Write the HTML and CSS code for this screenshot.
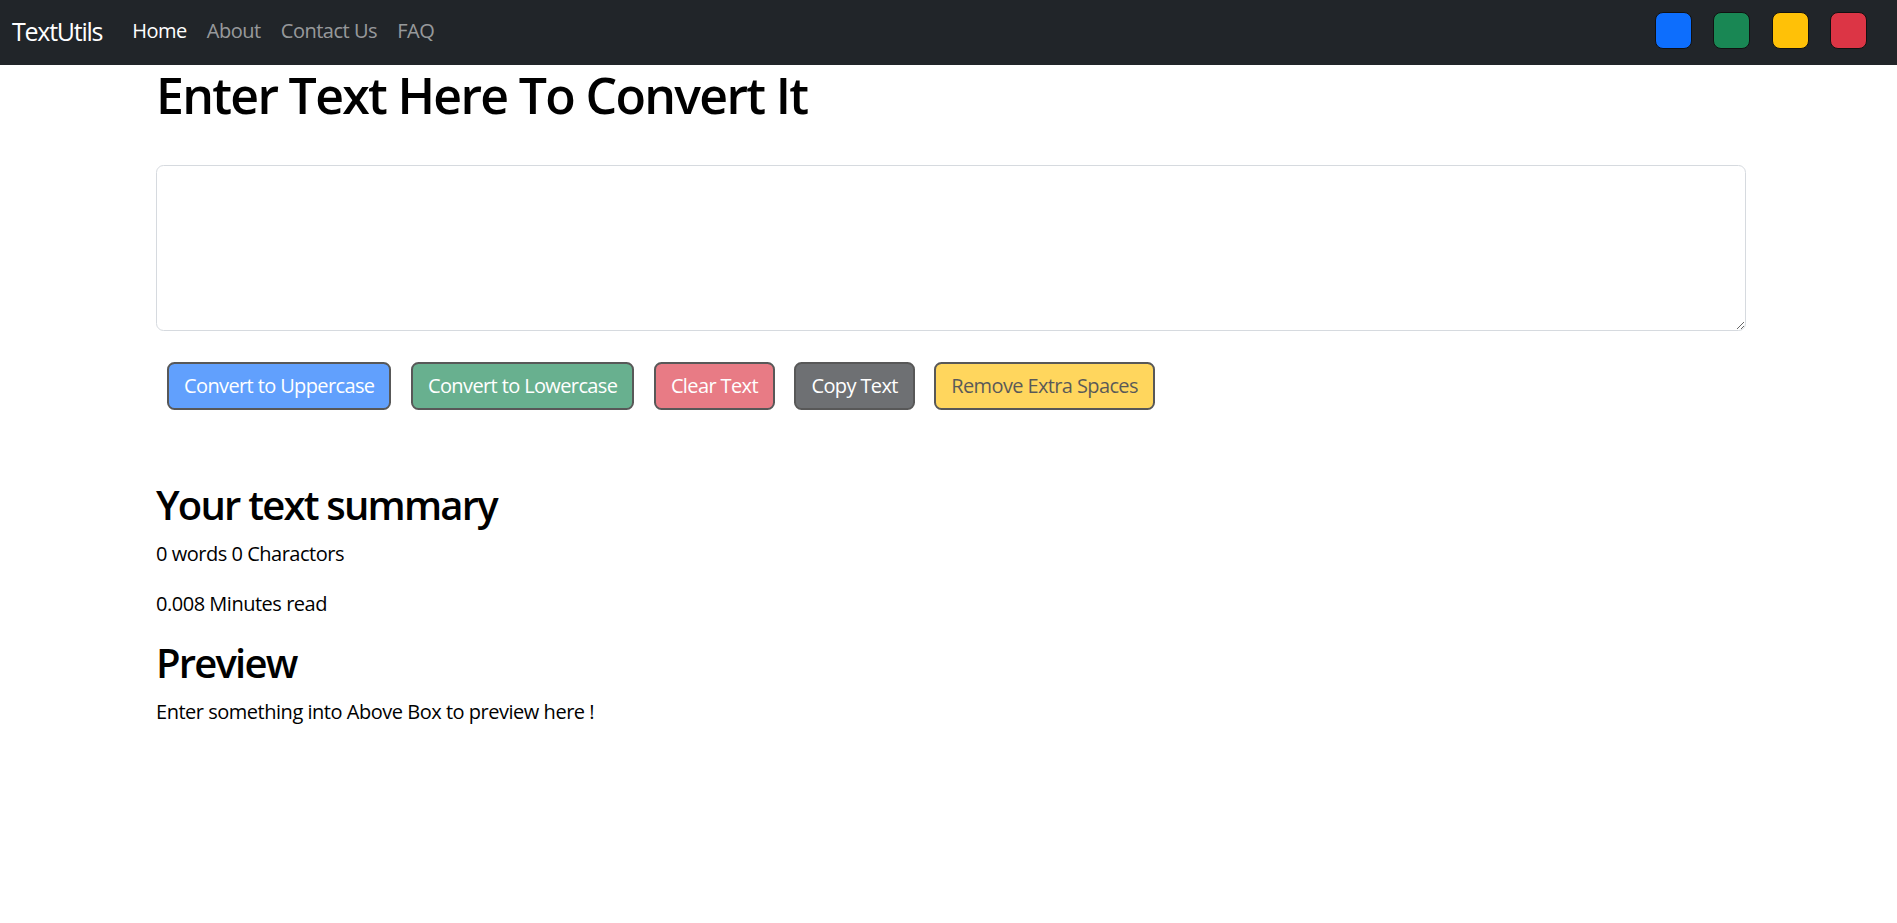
FILE: index.html
```html
<!DOCTYPE html>
<html lang="en">
<head>
<meta charset="utf-8">
<title>TextUtils</title>
<link rel="stylesheet" href="styles.css">
</head>
<body>
<nav class="navbar">
  <div class="nav-left">
    <a class="brand" href="#">TextUtils</a>
    <ul class="nav-links">
      <li><a class="nav-link active" href="#">Home</a></li>
      <li><a class="nav-link" href="#">About</a></li>
      <li><a class="nav-link" href="#">Contact Us</a></li>
      <li><a class="nav-link" href="#">FAQ</a></li>
    </ul>
  </div>
  <div class="themes">
    <span class="swatch swatch-blue"></span>
    <span class="swatch swatch-green"></span>
    <span class="swatch swatch-yellow"></span>
    <span class="swatch swatch-red"></span>
  </div>
</nav>
<main class="container">
  <h1 class="title">Enter Text Here To Convert It</h1>
  <textarea class="text-box" rows="8"></textarea>
  <div class="actions">
    <button class="btn btn-blue" disabled>Convert to Uppercase</button>
    <button class="btn btn-green" disabled>Convert to Lowercase</button>
    <button class="btn btn-red" disabled>Clear Text</button>
    <button class="btn btn-dark" disabled>Copy Text</button>
    <button class="btn btn-yellow" disabled>Remove Extra Spaces</button>
  </div>
  <section class="summary">
    <h2 class="section-title">Your text summary</h2>
    <p class="line">0 words 0 Charactors</p>
    <p class="line">0.008 Minutes read</p>
    <h2 class="section-title">Preview</h2>
    <p class="line">Enter something into Above Box to preview here !</p>
  </section>
</main>
</body>
</html>
```

FILE: styles.css
```css
* { box-sizing: border-box; }
html, body { margin: 0; padding: 0; }
body {
  font-family: "Open Sans", "Noto Sans", sans-serif;
  font-size: 20px;
  line-height: 30px;
  letter-spacing: -0.024em;
  color: #000;
  background: #fff;
}
.navbar {
  height: 65px;
  background: #212529;
  display: flex;
  align-items: center;
  justify-content: space-between;
  padding: 0 30px 4px 12px;
}
.nav-left { display: flex; align-items: center; }
.brand {
  color: #fff;
  text-decoration: none;
  font-size: 25px;
  line-height: 36px;
  letter-spacing: -0.05em;
  margin-right: 20px;
}
.nav-links { list-style: none; margin: 0; padding: 0; display: flex; }
.nav-link {
  display: block;
  padding: 0 10px;
  color: rgba(255,255,255,.55);
  text-decoration: none;
  font-size: 20px;
  line-height: 30px;
}
.nav-link.active { color: #fff; }
.themes { display: flex; gap: 21.5px; margin-top: -1px; }
.swatch {
  width: 37px;
  height: 37px;
  border: 1px solid #111;
  border-radius: 8px;
  display: block;
}
.swatch-blue { background: #0d6efd; }
.swatch-green { background: #198754; }
.swatch-yellow { background: #ffc107; }
.swatch-red { background: #dc3545; }

.container { width: 1590px; margin: 0 0 0 156px; }
.title {
  font-size: 50px;
  line-height: 60px;
  font-weight: 600;
  letter-spacing: -0.034em;
  margin: 0 0 40px;
}
.text-box {
  display: block;
  width: 100%;
  height: 166px;
  border: 1px solid #d6dadf;
  border-radius: 7.5px;
  padding: 8px 15px;
  font: inherit;
  resize: vertical;
}
.actions {
  display: flex;
  gap: 19.5px;
  margin: 31px 0 0 11px;
}
.btn {
  font: inherit;
  font-size: 20px;
  line-height: 30px;
  letter-spacing: -0.031em;
  padding: 7px 15px;
  border: 2px solid #000;
  border-radius: 7.5px;
  color: #fff;
}
.btn:disabled { opacity: .65; }
.btn-blue { background: #0d6efd; }
.btn-green { background: #198754; }
.btn-red { background: #dc3545; }
.btn-dark { background: #212529; }
.btn-yellow { background: #ffc107; color: #000; }

.summary { margin-top: 71px; }
.section-title {
  font-size: 40px;
  line-height: 48px;
  font-weight: 600;
  letter-spacing: -0.045em;
  margin: 0 0 10px;
}
.line { margin: 0 0 20px; }
```
